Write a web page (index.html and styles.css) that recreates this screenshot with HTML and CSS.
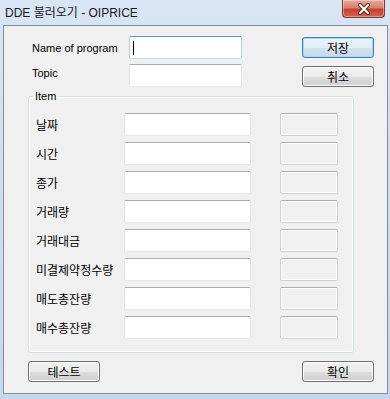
FILE: index.html
```html
<!DOCTYPE html>
<html>

<head>
    <title>DDE 불러오기 - OIPRICE</title>
    <link rel="stylesheet" href="styles.css">
</head>

<body>
    <div class="window">
        <div class="titlebar">
            <span class="title">DDE 불러오기 - OIPRICE</span>
            <div class="close-btn">
                <svg width="14" height="12" viewBox="0 0 14 12">
                    <path d="M3 2 L11 10 M11 2 L3 10" stroke="#5a2a24" stroke-width="4" stroke-linecap="round" />
                    <path d="M3 2 L11 10 M11 2 L3 10" stroke="#ffffff" stroke-width="2" stroke-linecap="round" />
                </svg>
            </div>
        </div>

        <div class="client">
            <div class="top">
                <div class="form">
                    <span class="label-en">Name of program</span>
                    <div class="textbox focused"><span class="caret"></span></div>
                    <span class="label-en topic">Topic</span>
                    <div class="textbox"></div>
                </div>
                <div class="side-buttons">
                    <button class="btn default">저장</button>
                    <button class="btn">취소</button>
                </div>
            </div>

            <!-- Item group -->
            <fieldset class="group">
                <legend>Item</legend>
                <div class="item-grid">
                    <span class="label-ko">날짜</span>
                    <div class="textbox"></div>
                    <div class="valuebox"></div>

                    <span class="label-ko">시간</span>
                    <div class="textbox"></div>
                    <div class="valuebox"></div>

                    <span class="label-ko">종가</span>
                    <div class="textbox"></div>
                    <div class="valuebox"></div>

                    <span class="label-ko">거래량</span>
                    <div class="textbox"></div>
                    <div class="valuebox"></div>

                    <span class="label-ko">거래대금</span>
                    <div class="textbox"></div>
                    <div class="valuebox"></div>

                    <span class="label-ko">미결제약정수량</span>
                    <div class="textbox"></div>
                    <div class="valuebox"></div>

                    <span class="label-ko">매도총잔량</span>
                    <div class="textbox"></div>
                    <div class="valuebox"></div>

                    <span class="label-ko">매수총잔량</span>
                    <div class="textbox"></div>
                    <div class="valuebox"></div>
                </div>
            </fieldset>

            <div class="bottom">
                <button class="btn">테스트</button>
                <button class="btn">확인</button>
            </div>
        </div>
    </div>
</body>

</html>
```

FILE: styles.css
```css
/* dialog frame */

body {
    margin: 0;
    padding: 0;
    font-family: "Liberation Sans", "Noto Sans CJK KR", sans-serif;
}

.window {
    width: 390px;
    height: 399px;
    display: flex;
    flex-direction: column;
    background: linear-gradient(to bottom, #d8e5f4 0%, #cfdff1 40%, #c4d7ed 100%);
}

.titlebar {
    height: 25px;
    display: flex;
    align-items: flex-start;
    padding: 0 5px 0 5px;
    box-sizing: border-box;
}

.title {
    padding-top: 6px;
    font-size: 12px;
    line-height: 15px;
    color: #1a1a1a;
}

.close-btn {
    margin-left: auto;
    width: 43px;
    height: 18px;
    box-sizing: border-box;
    border: 1px solid #7b3a33;
    border-top: none;
    border-radius: 0 0 4px 4px;
    background: linear-gradient(to bottom, #e9a99b 0%, #d9806f 45%, #c4432f 55%, #d4634d 100%);
    box-shadow: inset 0 0 0 1px rgba(255, 255, 255, 0.35);
    display: flex;
    justify-content: center;
    align-items: center;
}

.client {
    flex: 1;
    margin: 0 2px 5px 3px;
    border: 1px solid #838e9b;
    background-color: #f0f0f0;
    display: flex;
    flex-direction: column;
}

/* top part */

.top {
    display: flex;
    padding: 10px 0 0 28px;
}

.form {
    display: grid;
    grid-template-columns: 97px 113px;
    grid-auto-rows: 23px;
    row-gap: 5px;
}

.label-en {
    font-size: 11px;
    align-self: center;
    color: #000000;
}

.label-en.topic {
    margin-bottom: 5px;
}

.side-buttons {
    display: flex;
    flex-direction: column;
    gap: 8px;
    margin-left: 60px;
    padding-top: 1px;
}

/* controls */

.textbox {
    box-sizing: border-box;
    height: 23px;
    background-color: #ffffff;
    border: 1px solid #e2e3ea;
    border-top-color: #abadb3;
    border-bottom-color: #e3e9ef;
    border-radius: 2px;
    position: relative;
}

.textbox.focused {
    border-color: #b5cfe7;
    border-top-color: #5c93c6;
    border-bottom-color: #c5dcef;
}

.caret {
    position: absolute;
    left: 3px;
    top: 4px;
    width: 1px;
    height: 14px;
    background-color: #000000;
}

.valuebox {
    box-sizing: border-box;
    height: 23px;
    margin-left: 29px;
    background-color: #f0f0f0;
    border: 1px solid #cfcfcf;
    border-top-color: #adadad;
    border-radius: 2px;
    box-shadow: inset 0 0 0 1px #ffffff;
}

.btn {
    width: 72px;
    height: 21px;
    padding: 0;
    box-sizing: border-box;
    border: 1px solid #707070;
    border-radius: 3px;
    background: linear-gradient(to bottom, #f2f2f2 0%, #ebebeb 50%, #dddddd 51%, #cfcfcf 100%);
    box-shadow: inset 0 0 0 1px #fbfbfb;
    font-family: "Noto Sans CJK KR", sans-serif;
    font-size: 12px;
    line-height: 18px;
    color: #000000;
}

.btn.default {
    border-color: #3c7fb1;
    box-shadow: inset 0 0 0 1px #9fdcf8;
    background: linear-gradient(to bottom, #eaf4f9 0%, #e2eef5 50%, #d2e2ec 51%, #c6d9e6 100%);
}

/* item group */

.group {
    margin: 2px 0 0 24px;
    width: 326px;
    box-sizing: border-box;
    padding: 10px 0 13px 7px;
    border: 1px solid #d5dfe5;
    border-radius: 3px;
    box-shadow: inset 0 0 0 1px #ffffff;
}

.group legend {
    font-size: 11px;
    line-height: 14px;
    padding: 0 2px;
    margin-left: -3px;
    color: #000000;
}

.item-grid {
    display: grid;
    grid-template-columns: 88px 127px 87px;
    grid-auto-rows: 23px;
    row-gap: 6px;
}

.label-ko {
    font-family: "Noto Sans CJK KR", sans-serif;
    font-size: 12px;
    align-self: center;
    color: #000000;
}

.bottom {
    display: flex;
    justify-content: space-between;
    padding: 8px 13px 0 24px;
}
```
